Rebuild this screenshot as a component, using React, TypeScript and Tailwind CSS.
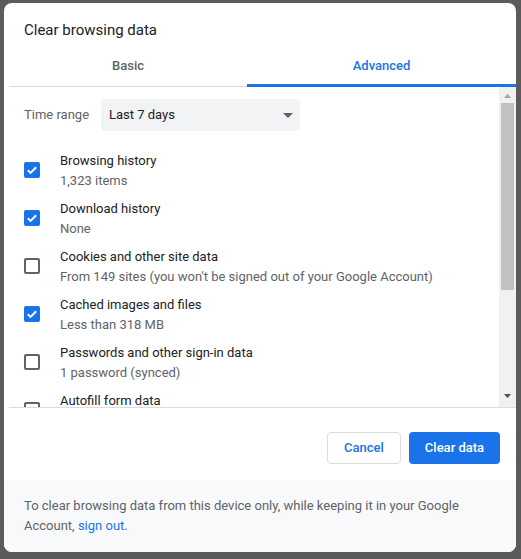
import React from "react";

type Item = {
  title: string;
  detail: string;
  checked: boolean;
};

const items: Item[] = [
  { title: "Browsing history", detail: "1,323 items", checked: true },
  { title: "Download history", detail: "None", checked: true },
  {
    title: "Cookies and other site data",
    detail: "From 149 sites (you won't be signed out of your Google Account)",
    checked: false,
  },
  { title: "Cached images and files", detail: "Less than 318 MB", checked: true },
  {
    title: "Passwords and other sign-in data",
    detail: "1 password (synced)",
    checked: false,
  },
  { title: "Autofill form data", detail: "", checked: false },
];

const Checkbox: React.FC<{ checked: boolean }> = ({ checked }) => {
  if (checked) {
    return (
      <svg width="16" height="16" viewBox="0 0 16 16" className="shrink-0">
        <rect width="16" height="16" rx="2" fill="#1a73e8" />
        <path
          d="M3.8 8.3l2.7 2.6 5.7-5.7"
          fill="none"
          stroke="#fff"
          strokeWidth="2"
        />
      </svg>
    );
  }
  return (
    <div className="h-4 w-4 shrink-0 rounded-[2px] border-2 border-[#5f6368]" />
  );
};

const App: React.FC = () => {
  return (
    <div
      className="h-[559px] w-[521px] overflow-hidden bg-[#5b5b5b] pl-1 pt-[3px]"
      style={{ fontFamily: "Roboto, 'Liberation Sans', sans-serif" }}
    >
      <div className="flex h-[549px] w-[512px] flex-col overflow-hidden rounded-lg bg-white">
        <h2 className="pl-5 pt-[17px] text-[15px] leading-5 text-[#202124]">
          Clear browsing data
        </h2>

        <div className="ml-[5px] mt-2 flex flex-col">
          {/* tabs */}
          <div className="flex items-start border-b border-[#dadce0] text-[13px] font-medium">
            <div className="flex h-[38px] w-[238px] items-center justify-center pb-[3px] text-[#5f6368]">
              Basic
            </div>
            <div className="-mb-px flex h-[39px] flex-1 items-center justify-center border-b-[3px] border-[#1a73e8] text-[#1a73e8]">
              Advanced
            </div>
          </div>

          {/* scroll area */}
          <div className="flex h-[320px]">
            <div className="flex-1 overflow-hidden pt-3 text-[13px]">
              <div className="flex items-center pl-[15px]">
                <span className="w-[77px] text-[#5f6368]">Time range</span>
                <div className="flex h-8 w-[199px] items-center justify-between rounded bg-[#f1f3f4] pl-2 pr-[7px] text-[#202124]">
                  <span>Last 7 days</span>
                  <svg width="10" height="5" viewBox="0 0 10 5">
                    <path d="M0 0h10L5 5z" fill="#5f6368" />
                  </svg>
                </div>
              </div>

              <div className="mt-[15px]">
                {items.map((item) => (
                  <div
                    key={item.title}
                    className="flex h-12 items-center gap-5 pl-[15px]"
                  >
                    <Checkbox checked={item.checked} />
                    <div className="flex flex-col pt-[2px] leading-5">
                      <span className="text-[#202124]">{item.title}</span>
                      <span className="text-[#5f6368]">
                        {item.detail || "\u00a0"}
                      </span>
                    </div>
                  </div>
                ))}
              </div>
            </div>

            {/* scrollbar */}
            <div className="flex w-[17px] flex-col bg-[#f1f1f1]">
              <div className="flex h-4 items-center justify-center pt-[2px]">
                <svg width="7" height="4" viewBox="0 0 7 4">
                  <path d="M0 4h7L3.5 0z" fill="#a3a3a3" />
                </svg>
              </div>
              <div className="mx-[2px] h-[187px] bg-[#c1c1c1]" />
              <div className="flex-1" />
              <div className="flex h-4 items-center justify-center pb-[6px]">
                <svg width="7" height="4" viewBox="0 0 7 4">
                  <path d="M0 0h7L3.5 4z" fill="#505050" />
                </svg>
              </div>
            </div>
          </div>

          <div className="h-px bg-[#dadce0]" />
        </div>

        {/* buttons */}
        <div className="flex h-[72px] items-start justify-end gap-2 pr-4 pt-6 text-[13px] font-medium">
          <button className="h-8 w-[74px] rounded border border-[#dadce0] bg-white text-[#1a73e8]">
            Cancel
          </button>
          <button className="h-8 w-[91px] rounded bg-[#1a73e8] text-white">
            Clear data
          </button>
        </div>

        {/* footer */}
        <div className="flex-1 bg-[#f8f9fa] px-5 pt-4 text-[13px] leading-5 text-[#5f6368]">
          To clear browsing data from this device only, while keeping it in your
          Google
          <br />
          Account, <span className="text-[#1a73e8]">sign out</span>.
        </div>
      </div>
    </div>
  );
};

export default App;
